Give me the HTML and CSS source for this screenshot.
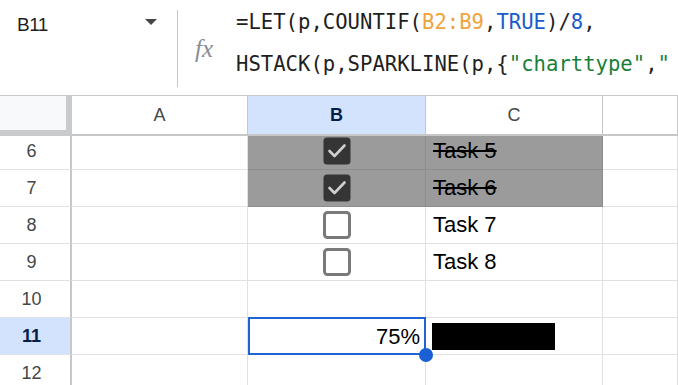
FILE: index.html
```html
<!DOCTYPE html>
<html>
<head>
<meta charset="utf-8">
<link rel="stylesheet" href="styles.css">
</head>
<body>
<div class="app">
  <div class="fbar">
    <div class="namebox"><span class="ref">B11</span><span class="caret"></span></div>
    <div class="sep"></div>
    <div class="fx">fx</div>
    <div class="formula">
      <div class="fline">=LET(p,COUNTIF(<span class="o">B2:B9</span>,<span class="b">TRUE</span>)/<span class="b">8</span>,</div>
      <div class="fline">HSTACK(p,SPARKLINE(p,{<span class="g">"charttype"</span>,<span class="g">"</span></div>
    </div>
  </div>
  <div class="grid">
    <div class="corner"></div>
    <div class="colh">A</div>
    <div class="colh on">B</div>
    <div class="colh">C</div>
    <div class="colh"></div>

    <div class="rowh r6">6</div>
    <div class="cell r6"></div>
    <div class="cell r6 done center">
      <svg class="cb" width="28" height="28" viewBox="0 0 28 28"><rect x="0.5" y="0.5" width="27" height="27" rx="3.5" fill="#353535"/><polyline points="6.5,14 11.5,19 21.5,8.5" fill="none" stroke="#cfcfcf" stroke-width="2.6" stroke-linecap="round" stroke-linejoin="round"/></svg>
    </div>
    <div class="cell r6 done text"><span class="strike">Task 5</span></div>
    <div class="cell r6"></div>

    <div class="rowh">7</div>
    <div class="cell"></div>
    <div class="cell done center">
      <svg class="cb" width="28" height="28" viewBox="0 0 28 28"><rect x="0.5" y="0.5" width="27" height="27" rx="3.5" fill="#353535"/><polyline points="6.5,14 11.5,19 21.5,8.5" fill="none" stroke="#cfcfcf" stroke-width="2.6" stroke-linecap="round" stroke-linejoin="round"/></svg>
    </div>
    <div class="cell done text"><span class="strike">Task 6</span></div>
    <div class="cell"></div>

    <div class="rowh">8</div>
    <div class="cell"></div>
    <div class="cell center">
      <svg class="cb" width="28" height="28" viewBox="0 0 28 28"><rect x="1.5" y="1.5" width="25" height="25" rx="3" fill="#fff" stroke="#7a7a7a" stroke-width="3"/></svg>
    </div>
    <div class="cell text">Task 7</div>
    <div class="cell"></div>

    <div class="rowh">9</div>
    <div class="cell"></div>
    <div class="cell center">
      <svg class="cb" width="28" height="28" viewBox="0 0 28 28"><rect x="1.5" y="1.5" width="25" height="25" rx="3" fill="#fff" stroke="#7a7a7a" stroke-width="3"/></svg>
    </div>
    <div class="cell text">Task 8</div>
    <div class="cell"></div>

    <div class="rowh">10</div>
    <div class="cell"></div>
    <div class="cell"></div>
    <div class="cell"></div>
    <div class="cell"></div>

    <div class="rowh on">11</div>
    <div class="cell"></div>
    <div class="cell sel num">75%<span class="handle"></span></div>
    <div class="cell spark"><div class="bar" style="width:75%"></div></div>
    <div class="cell"></div>

    <div class="rowh">12</div>
    <div class="cell"></div>
    <div class="cell"></div>
    <div class="cell"></div>
    <div class="cell"></div>
  </div>
</div>
</body>
</html>
```
FILE: styles.css
```css
* { box-sizing: border-box; }
html, body { margin: 0; padding: 0; background: #fff; }
body { width: 678px; height: 385px; overflow: hidden; font-family: "Liberation Sans", Arial, sans-serif; color: #1f1f1f; }
.app { width: 678px; height: 385px; overflow: hidden; }

.fbar {
  height: 96px;
  display: flex;
  border-bottom: 1px solid #c7c7c7;
}
.namebox {
  width: 177px;
  flex: none;
  display: flex;
  align-items: flex-start;
  padding: 15px 20px 0 17px;
}
.ref { font-size: 19px; line-height: 20px; color: #1f1f1f; letter-spacing: -0.5px; }
.caret {
  margin-left: auto;
  margin-top: 4px;
  width: 0; height: 0;
  border-left: 6.5px solid transparent;
  border-right: 6.5px solid transparent;
  border-top: 6px solid #444746;
}
.sep { width: 1px; flex: none; height: 77px; margin-top: 10px; background: #c4c7c5; }
.fx {
  margin-left: 17px;
  flex: none;
  align-self: center;
  font-family: "Liberation Serif", "Times New Roman", serif;
  font-style: italic;
  font-size: 25px;
  color: #8a8d91;
  width: 26px;
  margin-top: 2px;
}
.formula {
  margin-left: 15px;
  padding-top: 1px;
  font-family: "DejaVu Sans Mono", "Liberation Mono", monospace;
  font-size: 20.6px;
  line-height: 42px;
  color: #1f1f1f;
  flex: 1;
  min-width: 0;
  overflow: hidden;
}
.fline { white-space: pre; }
.o { color: #eea43a; }
.b { color: #1a5cc8; }
.g { color: #188038; }

.grid {
  display: grid;
  grid-template-columns: 72px 176px 178px 177px 75px;
  grid-template-rows: 40px 34px repeat(6, 37px);
}
.corner {
  background: #f8f9fa;
  border-right: 6px solid #c9cacb;
  border-bottom: 6px solid #c9cacb;
}
.colh {
  display: flex;
  align-items: center;
  justify-content: center;
  font-size: 18px;
  color: #444746;
  border-right: 1px solid #c7c7c7;
  border-bottom: 2px solid #c7c7c7;
  padding-top: 1px;
}
.colh.on { background: #d3e3fd; color: #041e49; font-weight: bold; }
.rowh {
  display: flex;
  align-items: center;
  justify-content: center;
  padding-right: 7px;
  font-size: 18px;
  color: #444746;
  border-right: 2px solid #c7c7c7;
  border-bottom: 1px solid #e1e1e1;
}
.rowh.on { background: #d3e3fd; color: #041e49; font-weight: bold; }
.cell {
  border-right: 1px solid #e1e1e1;
  border-bottom: 1px solid #e1e1e1;
  display: flex;
  align-items: center;
  font-size: 22px;
  color: #000;
}
.r6 { padding-bottom: 3px; }
.done { background: #9b9b9b; border-right-color: #8d8d8d; border-bottom-color: #8d8d8d; }
.center { justify-content: center; }
.text { padding-left: 7px; }
.strike { text-decoration: line-through; text-decoration-thickness: 1.5px; }
.cb { display: block; }

.sel { position: relative; justify-content: flex-end; padding-right: 5px; padding-top: 2px; }
.sel::after {
  content: "";
  position: absolute;
  top: -1px; left: 0; right: -1px; bottom: -1px;
  border: 2px solid #1f63d3;
}
.handle {
  position: absolute;
  width: 14px; height: 14px;
  right: -8px; bottom: -8px;
  border-radius: 50%;
  background: #1a5fd4;
  z-index: 2;
}
.spark { padding: 5px 6px 4px 6px; align-items: stretch; }
.bar { background: #000; height: 100%; }
```
